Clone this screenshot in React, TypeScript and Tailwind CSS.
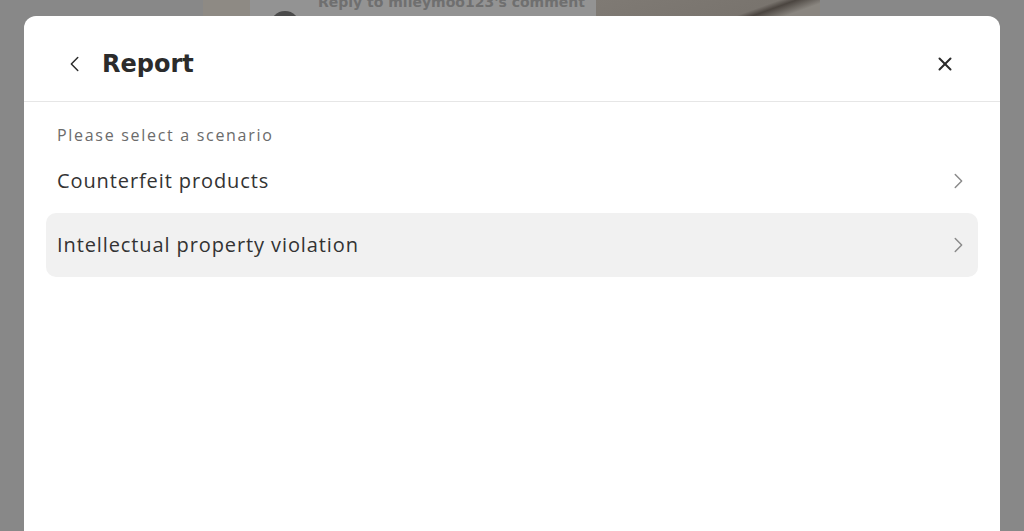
import { X } from "lucide-react";

const opcoes = ["Counterfeit products", "Intellectual property violation"];

function Chevron({ dir }: { dir: "left" | "right" }) {
  return (
    <svg viewBox="0 0 24 24" className="h-[22px] w-[22px]" fill="none" stroke="currentColor" strokeWidth="1.6" strokeLinecap="round" strokeLinejoin="round">
      {dir === "left" ? <polyline points="15 5 8 12 15 19" /> : <polyline points="9 5 16 12 9 19" />}
    </svg>
  );
}

export default function App() {
  return (
    <div
      className="relative h-[531px] w-[1024px] overflow-hidden bg-[#888888]"
      style={{ fontFamily: "'Open Sans', 'Noto Sans', sans-serif" }}
    >
      {/* page behind the overlay */}
      <div className="absolute left-[203px] top-0 flex h-[40px] w-[617px] bg-[#939393]">
        <div className="h-full w-[47px] bg-[#8e8a84]" />
        <div className="relative flex-1">
          <p
            className="absolute left-[68px] top-[-8px] whitespace-nowrap text-[14px] font-bold text-[#6f6f6f]"
            style={{ fontFamily: "'DejaVu Sans', sans-serif" }}
          >
            Reply to mileymoo123's comment
          </p>
          <div className="absolute left-[20px] top-[11px] h-[30px] w-[30px] rounded-full bg-[#4a4a4a]" />
        </div>
        <div className="h-full w-[224px] bg-[linear-gradient(160deg,#7f7a74_0%,#79746e_55%,#4b4540_60%,#8a8680_70%)]" />
      </div>

      <div className="absolute left-[24px] right-[24px] top-[16px] h-[540px] rounded-t-[12px] bg-white">
        <div className="flex h-[86px] items-center justify-between border-b border-[#e6e6e6] pl-[40px] pr-[44px] pt-[10px]">
          <div className="flex items-center gap-[16px] text-[#2b2b2b]">
            <Chevron dir="left" />
            <h2
              className="text-[24px] font-bold text-[#2b2b2b]"
              style={{ fontFamily: "'DejaVu Sans', sans-serif" }}
            >
              Report
            </h2>
          </div>
          <button aria-label="Close" className="text-[#2b2b2b]">
            <X className="h-[22px] w-[22px]" strokeWidth={2.2} />
          </button>
        </div>

        <div className="px-[22px] pt-[21px]">
          <p className="pl-[11px] text-[16px] tracking-[1.7px] text-[#6b6b6b]">Please select a scenario</p>
          <div className="mt-[2px] flex flex-col">
            {opcoes.map((o, i) => (
              <div
                key={o}
                className={
                  "flex h-[64px] items-center justify-between rounded-[10px] pl-[11px] pr-[9px] " +
                  (i === 1 ? "bg-[#f1f1f1]" : "")
                }
              >
                <span className="text-[20px] tracking-[0.9px] text-[#333333]">{o}</span>
                <span className="text-[#8a8a8a]">
                  <Chevron dir="right" />
                </span>
              </div>
            ))}
          </div>
        </div>
      </div>
    </div>
  );
}
